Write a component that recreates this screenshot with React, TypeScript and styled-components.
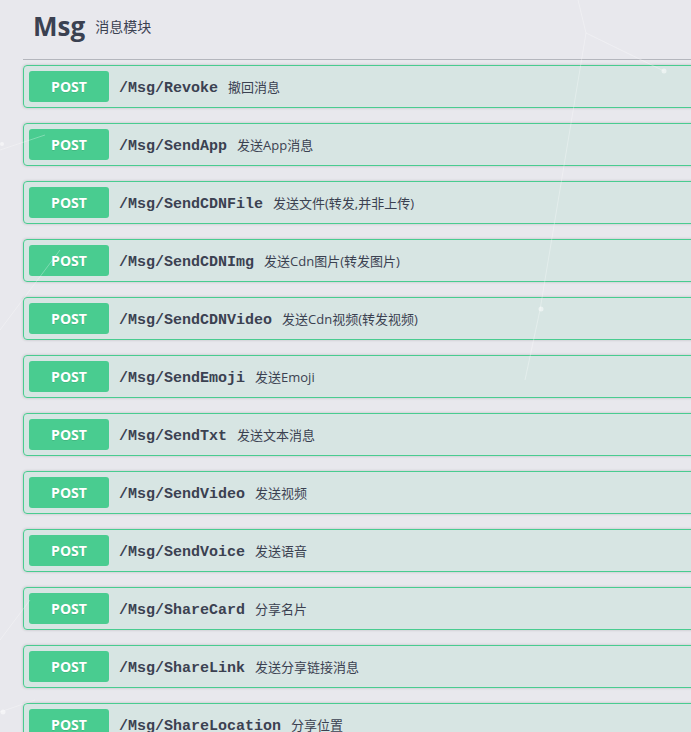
import React from "react";
import styled, { createGlobalStyle } from "styled-components";

const Global = createGlobalStyle`
  html, body { margin: 0; padding: 0; background: #e8e8ed; overflow: hidden; }
  body { font-family: "Open Sans", "Noto Sans CJK SC", sans-serif; color: #3b4151; }
`;

const Page = styled.div`
  position: relative;
  width: 780px;
  padding: 0 0 0 23px;
  box-sizing: border-box;
`;

const Backdrop = styled.svg`
  position: absolute;
  left: 0;
  top: 0;
  width: 691px;
  height: 732px;
  pointer-events: none;
`;

const Tag = styled.h3`
  display: flex;
  align-items: center;
  box-sizing: border-box;
  height: 60px;
  margin: 0 0 5px;
  padding: 0 20px 7px 10px;
  border-bottom: 1px solid rgba(59, 65, 81, 0.3);
  font-family: "Open Sans", sans-serif;
  font-size: 26px;
  font-weight: 700;
  color: #3b4151;
`;

const TagNote = styled.small`
  padding: 0 10px;
  font-family: "Open Sans", "Noto Sans CJK SC", sans-serif;
  font-size: 14px;
  font-weight: 400;
  color: #3b4151;
`;

const Block = styled.div`
  position: relative;
  margin: 0 0 15px;
  border: 1px solid #49cc90;
  border-radius: 4px;
  background: rgba(73, 204, 144, 0.1);
  box-shadow: 0 0 3px rgba(0, 0, 0, 0.19);
`;

const Summary = styled.div`
  display: flex;
  align-items: center;
  padding: 5px;
`;

const Method = styled.span`
  min-width: 80px;
  padding: 6px 0;
  border-radius: 3px;
  background: #49cc90;
  color: #fff;
  text-align: center;
  font-family: "Open Sans", sans-serif;
  font-size: 14px;
  line-height: 19px;
  font-weight: 700;
  text-shadow: 0 1px 0 rgba(0, 0, 0, 0.1);
`;

const Path = styled.span`
  padding: 3px 10px 0;
  font-family: "Liberation Mono", "Courier New", monospace;
  font-size: 15px;
  font-weight: 700;
  color: #3b4151;
`;

const Desc = styled.span`
  font-family: "Open Sans", "Noto Sans CJK SC", sans-serif;
  font-size: 13px;
  color: #3b4151;
`;

const items: [string, string][] = [
  ["/Msg/Revoke", "撤回消息"],
  ["/Msg/SendApp", "发送App消息"],
  ["/Msg/SendCDNFile", "发送文件(转发,并非上传)"],
  ["/Msg/SendCDNImg", "发送Cdn图片(转发图片)"],
  ["/Msg/SendCDNVideo", "发送Cdn视频(转发视频)"],
  ["/Msg/SendEmoji", "发送Emoji"],
  ["/Msg/SendTxt", "发送文本消息"],
  ["/Msg/SendVideo", "发送视频"],
  ["/Msg/SendVoice", "发送语音"],
  ["/Msg/ShareCard", "分享名片"],
  ["/Msg/ShareLink", "发送分享链接消息"],
  ["/Msg/ShareLocation", "分享位置"],
];

export default function App() {
  return (
    <>
      <Global />
      <Page>
        <Tag>
          Msg<TagNote>消息模块</TagNote>
        </Tag>
        {items.map(([p, d]) => (
          <Block key={p}>
            <Summary>
              <Method>POST</Method>
              <Path>{p}</Path>
              <Desc>{d}</Desc>
            </Summary>
          </Block>
        ))}
        <Backdrop viewBox="0 0 691 732">
          <g stroke="#ffffff" strokeOpacity="0.3" strokeWidth="1" fill="none">
            <line x1="578" y1="0" x2="586" y2="33" />
            <line x1="586" y1="33" x2="664" y2="71" />
            <line x1="586" y1="33" x2="540" y2="310" />
            <line x1="540" y1="310" x2="525" y2="380" />
            <line x1="0" y1="150" x2="45" y2="135" />
            <line x1="0" y1="330" x2="60" y2="250" />
            <line x1="0" y1="712" x2="35" y2="700" />
            <line x1="30" y1="600" x2="0" y2="640" />
          </g>
          <g fill="#ffffff" fillOpacity="0.5">
            <circle cx="664" cy="71" r="2.5" />
            <circle cx="541" cy="309" r="2.5" />
            <circle cx="2" cy="144" r="2" />
            <circle cx="3" cy="712" r="2.5" />
          </g>
        </Backdrop>
      </Page>
    </>
  );
}
